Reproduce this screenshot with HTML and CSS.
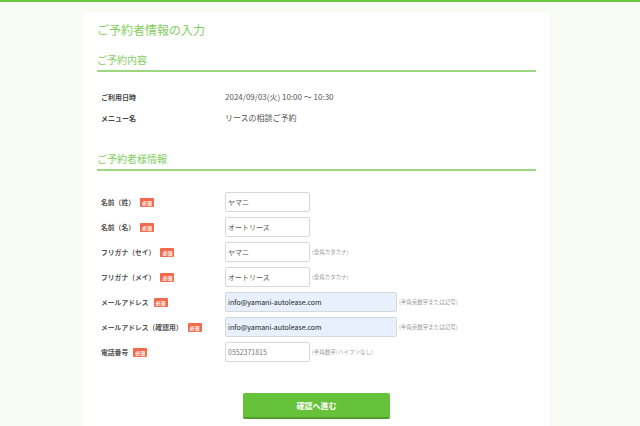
FILE: index.html
```html
<!DOCTYPE html>
<html lang="ja">
<head>
<meta charset="utf-8">
<title>ご予約者情報の入力</title>
<link rel="stylesheet" href="styles.css">
</head>
<body>
<div class="topbar"></div>
<main class="card">
  <h1 class="title">ご予約者情報の入力</h1>

  <h2 class="section">ご予約内容</h2>
  <div class="info">
    <div class="info-row"><div class="info-label">ご利用日時</div><div class="info-value">2024/09/03(火) 10:00 ～ 10:30</div></div>
    <div class="info-row"><div class="info-label">メニュー名</div><div class="info-value">リースの相談ご予約</div></div>
  </div>

  <h2 class="section section-2">ご予約者様情報</h2>
  <form class="form">
    <div class="form-row">
      <div class="label">名前（姓）<span class="req">必須</span></div>
      <div class="field"><input class="input" type="text" value="ヤマニ"></div>
    </div>
    <div class="form-row">
      <div class="label">名前（名）<span class="req">必須</span></div>
      <div class="field"><input class="input" type="text" value="オートリース"></div>
    </div>
    <div class="form-row">
      <div class="label">フリガナ（セイ）<span class="req">必須</span></div>
      <div class="field"><input class="input" type="text" value="ヤマニ"><span class="hint">(全角カタカナ)</span></div>
    </div>
    <div class="form-row">
      <div class="label">フリガナ（メイ）<span class="req">必須</span></div>
      <div class="field"><input class="input" type="text" value="オートリース"><span class="hint">(全角カタカナ)</span></div>
    </div>
    <div class="form-row">
      <div class="label">メールアドレス<span class="req">必須</span></div>
      <div class="field"><input class="input input-wide autofill" type="text" value="info@yamani-autolease.com"><span class="hint">(半角英数字または記号)</span></div>
    </div>
    <div class="form-row">
      <div class="label">メールアドレス（確認用）<span class="req">必須</span></div>
      <div class="field"><input class="input input-wide autofill" type="text" value="info@yamani-autolease.com"><span class="hint">(半角英数字または記号)</span></div>
    </div>
    <div class="form-row">
      <div class="label">電話番号<span class="req">必須</span></div>
      <div class="field"><input class="input input-tel" type="text" value="0552371815"><span class="hint">(半角数字/ハイフンなし)</span></div>
    </div>
  </form>
  <div class="actions">
    <button class="btn" type="button">確認へ進む</button>
  </div>
</main>
</body>
</html>
```

FILE: styles.css
```css
* { box-sizing: border-box; }
html, body { margin: 0; padding: 0; }
body {
  background: #f8fbf3;
  font-family: "Noto Sans CJK JP", "Noto Sans", sans-serif;
  color: #333;
  height: 426px;
  overflow: hidden;
}
.topbar {
  height: 2px;
  background: #6cc63f;
}
.card {
  width: 467px;
  margin: 10px 0 0 83px;
  background: #fff;
  padding: 10px 14px 0;
  height: 414px;
}
.title {
  margin: 0;
  font-size: 12px;
  line-height: 16px;
  font-weight: normal;
  color: #84cd60;
}
.section {
  margin: 15px 0 0;
  font-size: 10px;
  line-height: 14px;
  font-weight: normal;
  color: #84cd60;
  padding-bottom: 3px;
  border-bottom: 2px solid #9ed782;
}
.section-2 { margin-top: 24px; }
.info {
  margin-top: 14px;
  padding-left: 4px;
}
.info-row {
  display: flex;
  align-items: center;
  height: 21px;
}
.info-label {
  width: 124px;
  font-size: 7px;
  font-weight: bold;
  color: #444;
}
.info-value {
  font-size: 8px;
  color: #555;
}
.form {
  margin-top: 21px;
  padding-left: 4px;
  display: flex;
  flex-direction: column;
  gap: 5px;
}
.form-row {
  display: flex;
  align-items: center;
  height: 20px;
}
.label {
  width: 124px;
  font-size: 6.8px;
  font-weight: bold;
  color: #555;
  display: flex;
  align-items: center;
}
.req {
  display: inline-block;
  margin-left: 5px;
  background: #f26a4b;
  color: #fff;
  font-size: 5px;
  line-height: 9px;
  padding: 0 2px;
  border-radius: 1px;
}
.field {
  display: flex;
  align-items: center;
}
.input {
  width: 85px;
  height: 20px;
  border: 1px solid #d8d8d8;
  border-radius: 2px;
  padding: 0 2px;
  font-family: "Noto Sans CJK JP", "Noto Sans", sans-serif;
  font-size: 7px;
  color: #555;
  background: #fff;
  outline: none;
}
.input-wide { width: 172px; }
.autofill {
  background: #e8f0fe;
  color: #222;
}
.input-tel { color: #777; }
.hint {
  margin-left: 2px;
  font-size: 5.5px;
  color: #999;
}
.actions {
  display: flex;
  justify-content: center;
  margin-top: 31px;
}
.btn {
  width: 147px;
  height: 26px;
  border: none;
  border-bottom: 2px solid #4f9e2b;
  border-radius: 2px;
  background: #66c23a;
  color: #fff;
  font-family: "Noto Sans CJK JP", "Noto Sans", sans-serif;
  font-size: 8px;
  font-weight: bold;
}
```
